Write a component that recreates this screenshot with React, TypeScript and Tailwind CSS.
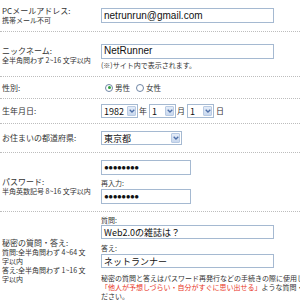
import React from "react";

const jp = { fontFamily: '"Noto Sans CJK JP", "Noto Sans", sans-serif' };
const latin = { fontFamily: '"Liberation Sans", "Noto Sans CJK JP", sans-serif' };

function Input({ value, w = "w-[173px]", password = false }: { value: string; w?: string; password?: boolean }) {
  return (
    <div
      className={`${w} h-[15px] border border-[#a5b9d1] bg-white flex items-center px-[2px] text-[10px] leading-none text-[#111] overflow-hidden whitespace-nowrap`}
      style={latin}
    >
      {password ? <span className="text-[8px] tracking-[-0.5px]">●●●●●●●●</span> : value}
    </div>
  );
}

function Select({ value, w }: { value: string; w: string }) {
  return (
    <div className={`${w} h-[14px] border border-[#a5b9d1] bg-white flex items-stretch`}>
      <div className="flex-1 flex items-center pl-[2px] text-[9px] leading-none text-[#111]" style={jp}>
        {value}
      </div>
      <div className="w-[9px] my-[1px] mr-[1px] bg-gradient-to-b from-[#e4ecf8] to-[#c9d8ee] border border-[#b8cae3] rounded-[1px] flex items-center justify-center">
        <svg width="6" height="4" viewBox="0 0 6 4">
          <path d="M0.7 0.7 L3 3 L5.3 0.7" stroke="#4d6fa8" strokeWidth="1.3" fill="none" />
        </svg>
      </div>
    </div>
  );
}

function Radio({ checked }: { checked?: boolean }) {
  return (
    <div className="w-[8px] h-[8px] rounded-full border border-[#6f86a6] bg-white flex items-center justify-center">
      {checked && <div className="w-[3px] h-[3px] rounded-full bg-[#2c9e3a]" />}
    </div>
  );
}

function Row({ left, right, className = "" }: { left: React.ReactNode; right: React.ReactNode; className?: string }) {
  return (
    <div className={`flex items-center border-b border-dotted border-[#bdbdbd] ${className}`}>
      <div className="w-[101px] pl-[2px] shrink-0">{left}</div>
      <div className="flex-1">{right}</div>
    </div>
  );
}

function Label({ children }: { children: React.ReactNode }) {
  return (
    <div className="text-[8px] leading-[10px] text-[#333]" style={jp}>
      {children}
    </div>
  );
}
function Sub({ children }: { children: React.ReactNode }) {
  return (
    <div className="text-[7px] leading-[9px] text-[#333]" style={jp}>
      {children}
    </div>
  );
}
function Small({ children }: { children: React.ReactNode }) {
  return (
    <div className="text-[7px] leading-[9px] text-[#333]" style={jp}>
      {children}
    </div>
  );
}

export default function App() {
  return (
    <div className="w-[300px] h-[302px] bg-white overflow-hidden" style={jp}>
      <Row
        className="h-[32px]"
        left={
          <div>
            <Label>PCメールアドレス:</Label>
            <Sub>携帯メール不可</Sub>
          </div>
        }
        right={<Input value="netrunrun@gmail.com" />}
      />
      <Row
        className="h-[45px]"
        left={
          <div className="pt-[3px]">
            <Label>ニックネーム:</Label>
            <Sub>全半角問わず 2~16 文字以内</Sub>
          </div>
        }
        right={
          <div className="flex flex-col gap-[2px] pt-[5px]">
            <Input value="NetRunner" />
            <Small>(※)サイト内で表示されます。</Small>
          </div>
        }
      />
      <Row
        className="h-[22px]"
        left={<Label>性別:</Label>}
        right={
          <div className="flex items-center text-[7.5px] text-[#333] pl-[4px]" style={jp}>
            <Radio checked />
            <span className="ml-[2px]">男性</span>
            <span className="ml-[6px]">
              <Radio />
            </span>
            <span className="ml-[2px]">女性</span>
          </div>
        }
      />
      <Row
        className="h-[25px]"
        left={<Label>生年月日:</Label>}
        right={
          <div className="flex items-center text-[8px] text-[#333]" style={jp}>
            <Select value="1982" w="w-[37px]" />
            <span className="ml-[1px] mr-[2px]">年</span>
            <Select value="1" w="w-[27px]" />
            <span className="ml-[1px] mr-[2px]">月</span>
            <Select value="1" w="w-[27px]" />
            <span className="ml-[2px]">日</span>
          </div>
        }
      />
      <Row
        className="h-[29px]"
        left={<Label>お住まいの都道府県:</Label>}
        right={<Select value="東京都" w="w-[81px]" />}
      />
      <Row
        className="h-[59px]"
        left={
          <div className="pt-[8px]">
            <Label>パスワード:</Label>
            <Sub>半角英数記号 8~16 文字以内</Sub>
          </div>
        }
        right={
          <div className="flex flex-col">
            <Input value="" password w="w-[90px]" />
            <div className="mt-[4px] mb-[1px]">
              <Small>再入力:</Small>
            </div>
            <Input value="" password w="w-[90px]" />
          </div>
        }
      />
      <div className="flex items-start pt-[4px]">
        <div className="w-[101px] pl-[2px] shrink-0 pt-[22px]">
          <Label>秘密の質問・答え:</Label>
          <div className="w-[88px]">
            <Sub>質問:全半角問わず 4~64 文字以内</Sub>
            <Sub>答え:全半角問わず 1~16 文字以内</Sub>
          </div>
        </div>
        <div className="flex-1 flex flex-col">
          <Small>質問:</Small>
          <div
            className="w-[173px] h-[14px] border border-[#a5b9d1] bg-white flex items-center px-[2px] text-[9px] leading-none text-[#111] whitespace-nowrap"
            style={jp}
          >
            Web2.0の雑誌は？
          </div>
          <div className="mt-[5px] mb-[1px]">
            <Small>答え:</Small>
          </div>
          <div
            className="w-[173px] h-[14px] border border-[#a5b9d1] bg-white flex items-center px-[2px] text-[9px] leading-none text-[#111] whitespace-nowrap"
            style={jp}
          >
            ネットランナー
          </div>
          <div className="mt-[6px] w-[199px] overflow-hidden text-[7px] leading-[9px] text-[#333] whitespace-nowrap" style={jp}>
            <div>秘密の質問と答えはパスワード再発行などの手続きの際に使用しま</div>
            <div>
              <span className="text-[#e8351e]">「他人が予想しづらい・自分がすぐに思い出せる」</span>ような質問・答えを入
            </div>
            <div>ださい。</div>
          </div>
        </div>
      </div>
    </div>
  );
}
